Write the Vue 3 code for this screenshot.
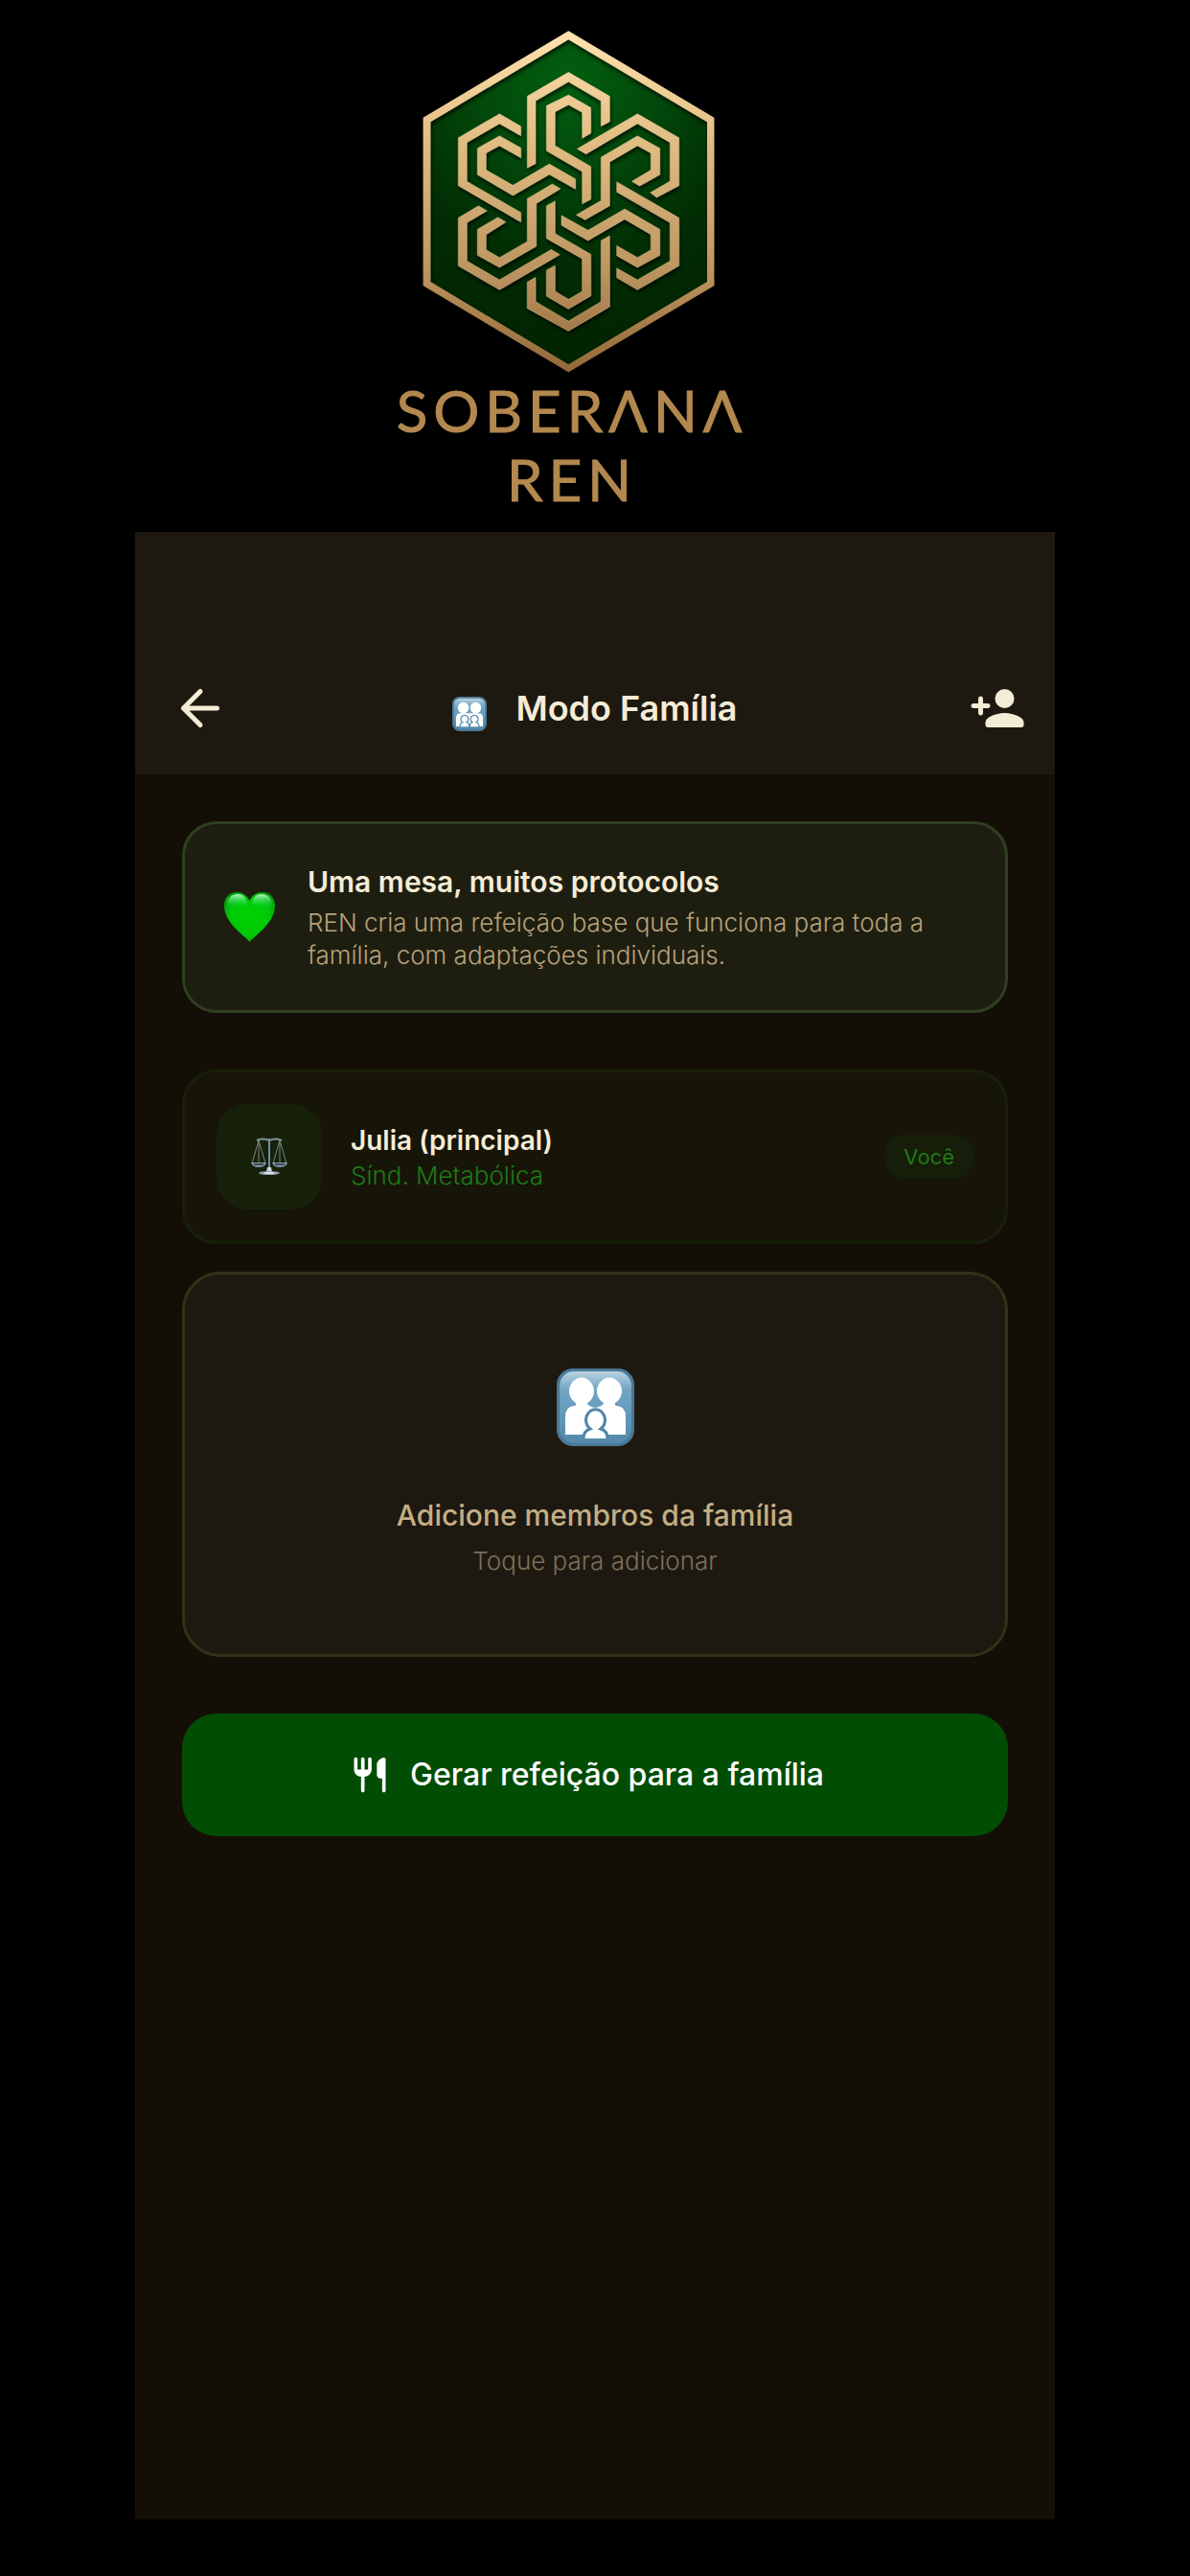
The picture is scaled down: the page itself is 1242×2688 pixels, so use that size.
<script setup>
import { ref } from "vue";

const members = ref([
  { id: 1, name: "Julia (principal)", protocol: "Sínd. Metabólica", isMe: true }
]);

// ribbons of the emblem
const knot = [
  "391,466 391,241 520,166 649,241 649,321 622,335 622,256 520,196 417,256 417,452",
  "451,271 520,237 590,277 590,357 563,373 563,292 520,268 478,290 478,396 590,461 590,564 563,578 563,477 451,412",
  "371,335 304,296 175,371 175,521 371,635 371,605 202,508 202,386 304,327 371,365",
  "371,403 304,365 235,404 235,487 346,552 460,486 542,532 542,500 460,453 346,520 262,472 262,419 304,396 371,434",
  "547,406 736,296 866,371 866,521 796,558 776,543 838,507 838,386 736,327 575,422",
  "622,432 736,365 806,404 806,487 743,522 718,508 778,472 778,419 736,396 649,447 649,584 572,628 544,613 622,568",
  "671,509 866,622 866,772 736,847 671,809 671,779 736,816 838,757 838,637 671,541",
  "498,614 581,661 696,594 806,658 806,739 736,777 671,740 671,709 736,746 778,722 778,674 696,626 581,693 498,645",
  "238,584 175,622 175,772 304,847 493,737 466,721 304,816 202,757 202,637 265,600",
  "299,620 235,658 235,739 304,777 419,711 419,577 495,531 469,516 391,562 391,696 304,746 262,722 262,674 324,635",
  "451,584 478,569 478,671 590,736 590,866 520,907 451,867 451,786 478,771 478,852 520,877 563,852 563,750 451,686",
  "391,823 417,808 417,884 520,945 622,884 622,693 649,678 649,900 520,976 391,905"
];
</script>

<template>
  <div class="page">
    <div class="brand">
      <svg class="emblem" viewBox="0 0 1050 1116" aria-hidden="true">
        <defs>
          <linearGradient id="gold" gradientUnits="userSpaceOnUse" x1="0" y1="40" x2="0" y2="1100">
            <stop offset="0" stop-color="#ffe2ae" />
            <stop offset="0.35" stop-color="#dfba80" />
            <stop offset="0.7" stop-color="#bd9560" />
            <stop offset="1" stop-color="#94693a" />
          </linearGradient>
          <radialGradient id="green" gradientUnits="userSpaceOnUse" cx="520" cy="190" r="820">
            <stop offset="0" stop-color="#025f10" />
            <stop offset="0.35" stop-color="#02480a" />
            <stop offset="0.7" stop-color="#012d03" />
            <stop offset="1" stop-color="#012401" />
          </radialGradient>
          <filter id="drop" x="-10%" y="-10%" width="120%" height="120%">
            <feDropShadow dx="2" dy="8" stdDeviation="7" flood-color="#000" flood-opacity="0.8" />
          </filter>
        </defs>
        <polygon fill="url(#green)" points="520,50 965,315 965,828 520,1093 76,828 76,315" />
        <path filter="url(#drop)" fill="url(#gold)" fill-rule="evenodd"
              d="M520 37 976 308V834L520 1105 65 834V308ZM520 64 88 322V822L520 1081 954 822V322Z" />
        <g filter="url(#drop)" fill="url(#gold)" stroke="#f3d7a6" stroke-opacity="0.45" stroke-width="2">
          <polygon v-for="(points, i) in knot" :key="i" :points="points" />
        </g>
      </svg>
      <div class="wordmark" role="img" aria-label="Soberana Ren">
        <span>SOBERΛNΛ</span>
        <span>REN</span>
      </div>
    </div>

    <div class="screen">
      <header class="topbar">
        <button class="icon-btn" type="button" aria-label="Voltar">
          <svg viewBox="0 0 24 24" fill="none" stroke="currentColor" stroke-width="2"
               stroke-linecap="round" stroke-linejoin="round">
            <path d="M19 12H5M12 5l-7 7 7 7" />
          </svg>
        </button>
        <h1 class="title">
          <svg class="title-emoji" viewBox="0 0 81 81" aria-hidden="true">
            <defs>
              <linearGradient id="tile" x1="0" y1="0" x2="0" y2="1">
                <stop offset="0" stop-color="#b9d3e2" />
                <stop offset="0.25" stop-color="#74a5c3" />
                <stop offset="0.6" stop-color="#6399bb" />
                <stop offset="1" stop-color="#5588a8" />
              </linearGradient>
            </defs>
            <rect width="81" height="81" rx="17" fill="#4a7896" />
            <rect x="4" y="4" width="73" height="73" rx="14" fill="url(#tile)" />
            <g fill="#fff">
              <circle cx="26" cy="26" r="13" />
              <circle cx="55" cy="26" r="13" />
              <path d="M9 70V50q0-11 10-11h43q10 0 10 11v20z" />
            </g>
            <g fill="#fff" stroke="#5c90b1" stroke-width="3">
              <path d="M18 72q0-10 6-12a9 9 0 1 1 10 0q6 2 6 12z" />
              <path d="M41 72q0-10 6-12a9 9 0 1 1 10 0q6 2 6 12z" />
            </g>
          </svg>
          <span>Modo Família</span>
        </h1>
        <button class="icon-btn" type="button" aria-label="Adicionar membro">
          <svg viewBox="0 0 24 24" fill="currentColor">
            <circle cx="15" cy="8" r="4" />
            <path d="M15 14c-2.670 0-8 1.340-8 4v1c0 .55.45 1 1 1h14c.55 0 1-.45 1-1v-1c0-2.660-5.330-4-8-4z" />
            <path d="M6 10V8c0-.55-.45-1-1-1s-1 .45-1 1v2H2c-.55 0-1 .45-1 1s.45 1 1 1h2v2c0 .55.45 1 1 1s1-.45 1-1v-2h2c.55 0 1-.45 1-1s-.45-1-1-1H6z" />
          </svg>
        </button>
      </header>

      <main class="content">
        <section class="card info">
          <svg class="heart" viewBox="0 0 65 65" aria-hidden="true">
            <defs>
              <radialGradient id="heartFill" cx="0.5" cy="0.5" r="0.6">
                <stop offset="0" stop-color="#00d400" />
                <stop offset="0.65" stop-color="#00c808" />
                <stop offset="1" stop-color="#069a0a" />
              </radialGradient>
              <linearGradient id="shine" x1="0" y1="0" x2="0" y2="1">
                <stop offset="0" stop-color="#b9f5c2" />
                <stop offset="1" stop-color="#00d83a" stop-opacity="0" />
              </linearGradient>
            </defs>
            <path fill="url(#heartFill)"
                  d="M34.500 58C29 51 8 38 8 20 8 11 14 6 21 6c6 0 11 3 13.500 9C37 9 42 6 48 6c7 0 13 5 13 14 0 18-21 31-26.500 38z" />
            <path fill="url(#shine)" d="M11 20c0-8 5-12 11-12 5 0 9 3 10 10-3 5-17 6-21 2z" />
            <path fill="url(#shine)" d="M37 18c1-7 5-10 10-10 6 0 11 4 11 12-4 4-18 3-21-2z" />
          </svg>
          <div class="info-text">
            <h2 class="card-title">Uma mesa, muitos protocolos</h2>
            <p class="card-text">REN cria uma refeição base que funciona para toda a família, com adaptações individuais.</p>
          </div>
        </section>

        <section v-for="member in members" :key="member.id" class="card member">
          <div class="avatar">
            <svg viewBox="0 0 40 40" fill="none" aria-hidden="true">
              <path d="M7 3q6-3 13 0 7-3 13 0" stroke="#8298a3" stroke-width="2" />
              <path d="M9 3 2 27M9 3v24M9 3l7 24M31 3l-7 24M31 3v24M31 3l7 24" stroke="#76857e" stroke-width="1" />
              <path d="M20 1v32" stroke="#6e8fa3" stroke-width="2" />
              <path d="M1 26h16q-1 5-8 5t-8-5zM23 26h16q-1 5-8 5t-8-5z" fill="#7896ab" />
              <path d="M4 28h10M26 28h10" stroke="#4d4849" stroke-width="2" />
              <path d="M18 31h4l1 5h-6z" fill="#cfd5db" />
              <ellipse cx="20" cy="37" rx="11" ry="2" fill="#8f9cab" />
              <ellipse cx="20" cy="37" rx="6" ry="1" fill="#e6e8ee" />
            </svg>
          </div>
          <div class="member-text">
            <h2 class="member-name">{{ member.name }}</h2>
            <p class="protocol">{{ member.protocol }}</p>
          </div>
          <span v-if="member.isMe" class="badge">Você</span>
        </section>

        <button class="card add" type="button">
          <svg class="family" viewBox="0 0 81 81" aria-hidden="true">
            <rect width="81" height="81" rx="17" fill="#4a7896" />
            <rect x="3" y="3" width="75" height="75" rx="15" fill="url(#tile)" />
            <g fill="#fff">
              <path d="M9 69V50q0-10 9-11 3 0 2-3a13 14 0 1 1 12 0q0 3 8 5 9-2 9-5a13 14 0 1 1 12 0q-1 3 2 3 9 1 9 11v19z" />
            </g>
            <path fill="#fff" stroke="#4f86a9" stroke-width="3"
                  d="M28 73q0-8 7-10a10 11 0 1 1 11 0q7 2 7 10" />
          </svg>
          <span class="add-title">Adicione membros da família</span>
          <span class="add-text">Toque para adicionar</span>
        </button>

        <button class="generate" type="button">
          <svg viewBox="0 0 24 24" fill="currentColor" aria-hidden="true">
            <path d="M16 6v6c0 1.100.9 2 2 2h1v7c0 .55.45 1 1 1s1-.45 1-1V3.130c0-.65-.61-1.130-1.240-.98C17.600 2.680 16 4.510 16 6zm-5 3H9V3c0-.55-.45-1-1-1s-1 .45-1 1v6H5V3c0-.55-.45-1-1-1s-1 .45-1 1v6c0 2.210 1.790 4 4 4v8c0 .55.45 1 1 1s1-.45 1-1v-8c2.210 0 4-1.790 4-4V3c0-.55-.45-1-1-1s-1 .45-1 1v6z" />
          </svg>
          <span>Gerar refeição para a família</span>
        </button>
      </main>
    </div>
  </div>
</template>

<style>
body {
  margin: 0;
  background: #000;
}
</style>

<style scoped>
.page {
  box-sizing: border-box;
  min-height: 100vh;
  display: flex;
  flex-direction: column;
  padding: 20px 141px 59px;
  background: #000;
  font-family: Inter, "Open Sans", sans-serif;
  color: #f5ecd7;
}

.brand {
  display: flex;
  flex-direction: column;
  align-items: center;
  padding-right: 52px;
}

.emblem {
  width: 350px;
  height: 372px;
}

.wordmark {
  display: flex;
  flex-direction: column;
  align-items: center;
  padding: 0 0 19px 4px;
  font-family: Lato, sans-serif;
  font-size: 60px;
  line-height: 72px;
  letter-spacing: 6px;
  color: #b3884f;
  -webkit-text-stroke: 1px #b3884f;
}

.screen {
  flex: 1;
  background: #140f06;
}

.topbar {
  display: flex;
  align-items: center;
  justify-content: space-between;
  padding: 154px 30px 39px;
  background: #1e1910;
}

.icon-btn {
  display: flex;
  padding: 0 8px;
  border: 0;
  background: none;
  color: inherit;
  cursor: pointer;
}

.icon-btn:last-child {
  padding: 0 0 0 16px;
}

.icon-btn svg {
  width: 60px;
  height: 60px;
}

.title {
  display: flex;
  align-items: flex-end;
  gap: 30px;
  margin: 0;
  font-size: 36px;
  line-height: 48px;
  font-weight: 600;
}

.title-emoji {
  width: 36px;
  height: 36px;
}

.content {
  display: flex;
  flex-direction: column;
  padding: 49px 49px 60px;
}

.card {
  box-sizing: border-box;
  border: 3px solid;
  border-radius: 36px;
}

h2,
p {
  margin: 0;
}

.info {
  display: flex;
  align-items: center;
  gap: 30px;
  margin-bottom: 59px;
  padding: 40px 33px;
  background: #1e1e10;
  border-color: #2f3f1f;
}

.heart {
  flex: none;
  width: 65px;
  height: 65px;
}

.card-title,
.member-name {
  font-size: 28px;
  line-height: 40px;
  font-weight: 600;
}

.card-title {
  font-size: 30px;
}

.card-text {
  margin-top: 6px;
  font-size: 26px;
  line-height: 34px;
  font-weight: 300;
  color: #b8a27a;
}

.member {
  display: flex;
  align-items: center;
  gap: 30px;
  margin-bottom: 29px;
  padding: 33px;
  background: #161507;
  border-color: #17200a;
}

.avatar {
  display: flex;
  align-items: center;
  justify-content: center;
  width: 110px;
  height: 110px;
  border-radius: 32px;
  background: #17210a;
}

.avatar svg {
  width: 40px;
  height: 40px;
}

.member-text {
  flex: 1;
}

.protocol {
  font-size: 26px;
  line-height: 34px;
  font-weight: 300;
  color: #1f7a16;
}

.badge {
  padding: 6px 20px;
  border-radius: 20px;
  background: #161d09;
  color: #1f7a16;
  font-size: 22px;
  line-height: 34px;
}

.add {
  display: flex;
  flex-direction: column;
  align-items: center;
  margin-bottom: 59px;
  padding: 98px 33px 80px;
  border-radius: 40px;
  background: #1e1910;
  border-color: #353018;
  font-family: inherit;
  cursor: pointer;
}

.family {
  width: 81px;
  height: 81px;
  margin-bottom: 52px;
}

.add-title {
  font-size: 30px;
  line-height: 40px;
  font-weight: 500;
  color: #c4ae85;
}

.add-text {
  margin-top: 11px;
  font-size: 26px;
  line-height: 34px;
  font-weight: 300;
  color: #7d6f59;
}

.generate {
  display: flex;
  align-items: center;
  justify-content: center;
  gap: 20px;
  padding: 40px 58px 40px 40px;
  border: 0;
  border-radius: 36px;
  background: #024d04;
  color: #fff;
  font-family: inherit;
  font-size: 32px;
  line-height: 48px;
  font-weight: 500;
  cursor: pointer;
}

.generate svg {
  width: 44px;
  height: 44px;
}
</style>
